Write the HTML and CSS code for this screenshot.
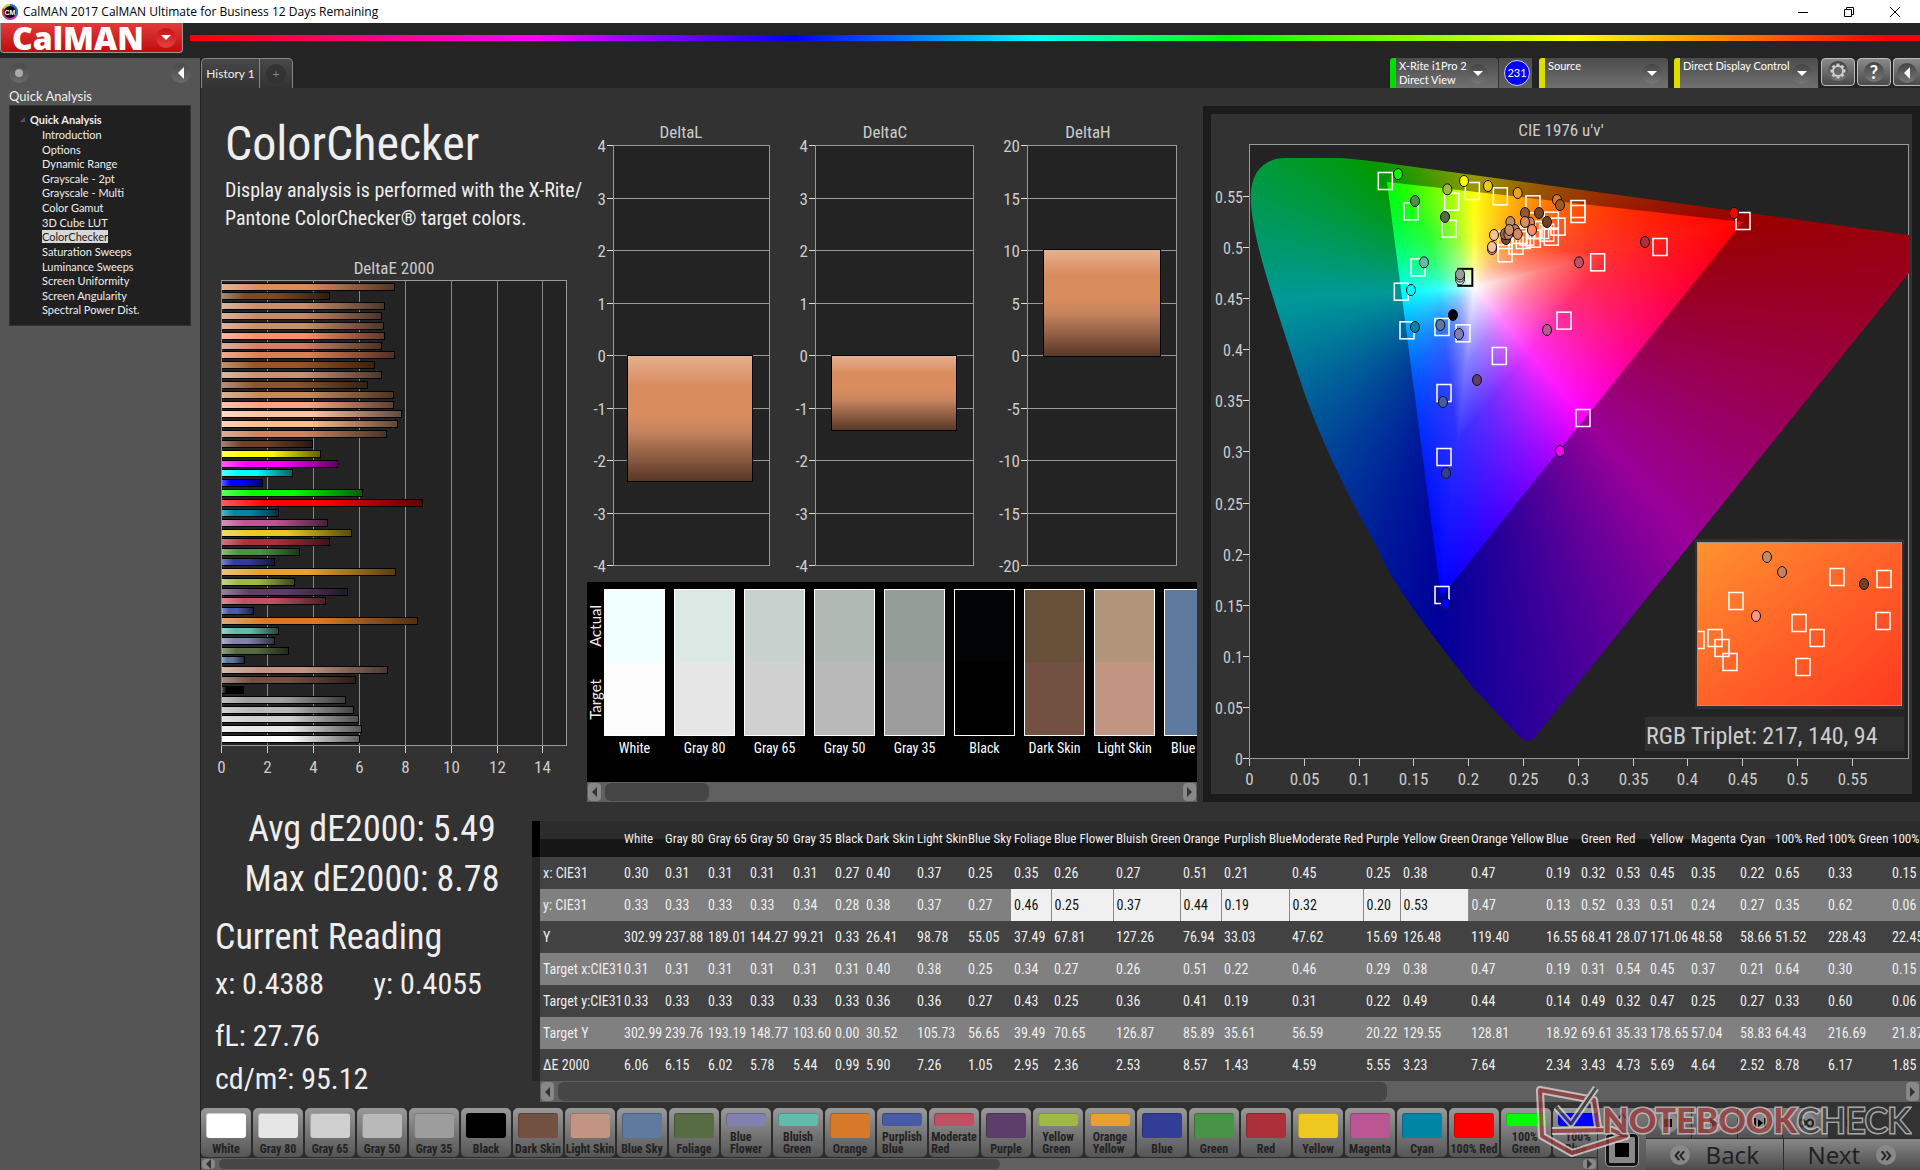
FILE: index.html
```html
<!DOCTYPE html>
<html lang="en">
<head>
<meta charset="utf-8">
<title>CalMAN 2017</title>
<link rel="stylesheet" href="styles.css">
</head>
<body>
<header class="titlebar">
  <svg class="app-icon" viewBox="0 0 16 16" width="16" height="16"><circle cx="8" cy="8" r="8" fill="#3ac04a"/><path d="M8 8L8 0A8 8 0 0 1 15 12Z" fill="#2a6be0"/><path d="M8 8L15 12A8 8 0 0 1 2 13Z" fill="#c030d0"/><path d="M8 8L2 13A8 8 0 0 1 1 4Z" fill="#f0302a"/><path d="M8 8L1 4A8 8 0 0 1 8 0Z" fill="#e8d020"/><circle cx="8" cy="8" r="6" fill="#080808"/><text x="8" y="11" text-anchor="middle" class="app-icon-text">CM</text></svg>
  <span class="window-title">CalMAN 2017 CalMAN Ultimate for Business 12 Days Remaining</span>
  <div class="window-controls">
    <button aria-label="Minimize"><svg width="12" height="12"><path d="M1 6.500H11" stroke="#000"/></svg></button>
    <button aria-label="Restore"><svg width="12" height="12"><path d="M1.500 3.500H8.500V10.500H1.500ZM3.500 3.500V1.500H10.500V8.500H8.500" fill="none" stroke="#000"/></svg></button>
    <button aria-label="Close"><svg width="12" height="12"><path d="M1 1L11 11M11 1L1 11" stroke="#000"/></svg></button>
  </div>
</header>
<div class="brandbar">
  <button class="logo">CalMAN<span class="round logo-round"><svg width="10" height="6"><path d="M0 0H10L5 5Z" fill="#fff"/></svg></span></button>
  <div class="rainbow"></div>
</div>
<div class="app">
  <aside class="sidebar">
    <div class="side-top">
      <button class="round" aria-label="Pin"><i class="dot"></i></button>
      <button class="round" aria-label="Collapse"><svg width="8" height="12"><path d="M7 0V12L1 6Z" fill="#fff"/></svg></button>
    </div>
    <h2 class="side-title">Quick Analysis</h2>
    <nav class="tree">
      <div class="tree-root"><svg width="6" height="6"><path d="M5 0V5H0Z" fill="#555"/></svg>Quick Analysis</div>
      <ul>
        <li><a href="#">Introduction</a></li><li><a href="#">Options</a></li><li><a href="#">Dynamic Range</a></li><li><a href="#">Grayscale - 2pt</a></li><li><a href="#">Grayscale - Multi</a></li><li><a href="#">Color Gamut</a></li><li><a href="#">3D Cube LUT</a></li><li><a href="#" class="current">ColorChecker</a></li><li><a href="#">Saturation Sweeps</a></li><li><a href="#">Luminance Sweeps</a></li><li><a href="#">Screen Uniformity</a></li><li><a href="#">Screen Angularity</a></li><li><a href="#">Spectral Power Dist.</a></li>
      </ul>
    </nav>
  </aside>
  <div class="column">
    <div class="tabbar">
      <div class="tabs"><button class="tab">History 1</button><button class="tab add" aria-label="Add tab"><span class="round">+</span></button></div>
      <div class="devices">
        <button class="device meter"><span>X-Rite i1Pro 2<br>Direct View</span><i class="round drop"></i></button>
        <button class="count"><b>231</b></button>
        <button class="device source"><span>Source</span><i class="round drop"></i></button>
        <button class="device display"><span>Direct Display Control</span><i class="round drop"></i></button>
        <button class="tool" aria-label="Settings"><span class="round"><svg width="18" height="18" viewBox="0 0 18 18"><path d="M9 1.500V4M9 14V16.500M1.500 9H4M14 9H16.500M3.700 3.700L5.500 5.500M12.500 12.500L14.300 14.300M3.700 14.300L5.500 12.500M12.500 5.500L14.300 3.700" stroke="#ccc" stroke-width="3"/><circle cx="9" cy="9" r="5" fill="#666" stroke="#ccc" stroke-width="2"/></svg></span></button>
        <button class="tool" aria-label="Help"><span class="round">?</span></button>
        <button class="tool last" aria-label="Collapse"><span class="round"><svg width="8" height="12"><path d="M7 0V12L1 6Z" fill="#fff"/></svg></span></button>
      </div>
    </div>
    <main class="workspace">
      <section class="upper">
        <div class="left">
          <div class="intro"><h1>ColorChecker</h1><p>Display analysis is performed with the X-Rite/<br>Pantone ColorChecker® target colors.</p></div>
          <svg id="deltaE" viewBox="201 255 378 545"></svg>
        </div>
        <div class="middle">
          <svg id="deltas" viewBox="579 110 624 466"></svg>
          <div class="compare">
            <div class="compare-view">
              <div class="side-labels"><span>Actual</span><span>Target</span></div>
              <div class="pairs" id="pairs"></div>
            </div>
            <div class="scroll"><button class="arrow" aria-label="Left"></button><i class="thumb"></i><button class="arrow forward" aria-label="Right"></button></div>
          </div>
        </div>
        <div class="cie-panel"><svg id="cie" viewBox="1211 114 701 680"></svg></div>
      </section>
      <section class="lower">
        <div class="readings">
          <p class="big">Avg dE2000: 5.49</p>
          <p class="big">Max dE2000: 8.78</p>
          <h2>Current Reading</h2>
          <p class="xy"><span>x: 0.4388</span><span>y: 0.4055</span></p>
          <p class="lum">fL: 27.76</p>
          <p class="nits">cd/m²: 95.12</p>
        </div>
        <div class="data">
          <div class="table-clip"><table id="data"></table></div>
          <div class="scroll data-scroll"><button class="arrow" aria-label="Left"></button><i class="thumb"></i><button class="arrow forward" aria-label="Right"></button></div>
        </div>
      </section>
    </main>
    <footer class="bottom">
      <div class="patches">
        <div class="patch-list" id="patches"></div>
        <div class="scroll patch-scroll"><button class="arrow" aria-label="Left"></button><i class="thumb"></i><button class="arrow forward" aria-label="Right"></button></div>
      </div>
      <div class="stopbox"><button class="up" aria-label="Up"><svg width="12" height="8"><path d="M2 7L6 2L10 7" fill="none" stroke="#222" stroke-width="2"/></svg></button><button class="stop" aria-label="Stop"><i></i></button></div>
      <div class="transport">
        <div class="media">
          <button aria-label="Stop"><span class="round"><svg width="10" height="10"><path d="M1 1H9V9H1Z"/></svg></span></button>
          <button aria-label="Play"><span class="round"><svg width="10" height="10"><path d="M1 0L10 5L1 10Z"/></svg></span></button>
          <button aria-label="Step"><span class="round"><svg width="12" height="10"><path d="M0 0H2V10H0ZM10 0H12V10H10ZM4 1L9 5L4 9Z"/></svg></span></button>
          <button aria-label="Loop"><span class="round"><svg width="16" height="10"><path d="M8 5C5 0 1 1 1 5S5 10 8 5S15 1 15 5S11 10 8 5Z" fill="none" stroke="#222" stroke-width="2"/></svg></span></button>
          <button class="off" aria-label="Refresh"><span class="round"><svg width="12" height="12"><path d="M10 4A5 5 0 1 0 10 8M10 1V5H6" fill="none" stroke="#222" stroke-width="2"/></svg></span></button>
          <button class="off" aria-label="Record"><span class="round"></span></button>
        </div>
        <div class="steps"><button><span class="round">«</span>Back</button><button>Next<span class="round">»</span></button></div>
      </div>
      <div class="watermark">
        <svg viewBox="0 0 96 76" width="96" height="76"><g fill="none" stroke-linejoin="round"><path d="M64 44L60 17L6 7L8 53L38 70L92 53L78 47L18 48" stroke="#ddd" stroke-width="8"/><path d="M64 44L60 17L6 7L8 53L38 70L92 53L78 47L18 48" stroke="#a03c3c" stroke-width="4"/><path d="M22 24L37 41L62 5" stroke="#ddd" stroke-width="7"/><path d="M22 24L37 41L62 5" stroke="#444" stroke-width="3"/></g></svg>
        <span class="mark-red">NOTEBOOK</span><span class="mark-dark">CHECK</span>
      </div>
    </footer>
  </div>
</div>
<script src="app.js"></script>
</body>
</html>
```
FILE: styles.css
```css
:root {
  --ui: "Lato", "Open Sans", sans-serif;
  --narrow: "Roboto Condensed", "Roboto", sans-serif;
}
* { box-sizing: border-box; }
body { margin: 0; min-height: 100vh; display: flex; flex-direction: column; background: #242424; color: #eee; font: 12px/15px var(--ui); overflow-x: hidden; }
button { font: inherit; color: inherit; border: 0; padding: 0; margin: 0; background: none; }
h1, h2, p, ul { margin: 0; padding: 0; font-weight: 400; }
ul { list-style: none; }
svg { display: block; }
a { color: inherit; text-decoration: none; }

.titlebar { height: 23px; background: #fff; color: #000; display: flex; align-items: center; padding: 0 19px 0 2px; gap: 5px; font: 12px/16px "Noto Sans", sans-serif; }
.titlebar .window-title { font-family: "Open Sans", sans-serif; }
.window-title { flex: 1; }
.window-controls { display: flex; gap: 34px; }

.brandbar { height: 35px; display: flex; align-items: flex-start; gap: 7px; }
.logo { width: 183px; height: 30px; border: 1px solid #999; border-top: 0; border-radius: 0 0 4px 4px; background: linear-gradient(#e23b3b, #c00d0d); font: 800 32px/28px "Open Sans", sans-serif; color: #fff; display: flex; align-items: center; justify-content: space-between; padding: 0 6px 0 11px; }
.round { width: 20px; height: 20px; border-radius: 50%; background: linear-gradient(#444, #777); display: inline-flex; align-items: center; justify-content: center; flex: none; }
.logo-round { background: linear-gradient(#c01515, #e84040); }
.rainbow { flex: 1; height: 6px; margin-top: 12px; background: linear-gradient(90deg, #f00 0%, #f0f 20%, #00f 35%, #0ff 49%, #0f0 60%, #ff0 80%, #f00 98%); }

.app { flex: 1; display: flex; }
.sidebar { width: 201px; flex: none; background: #555; border-right: 1px solid #222; padding: 5px 9px; }
.side-top { display: flex; justify-content: space-between; }
.dot { width: 8px; height: 8px; border-radius: 50%; background: #aaa; }
.sidebar .round { background: linear-gradient(#4a4a4a, #6a6a6a); }
.side-title { font-size: 13px; line-height: 16px; margin: 5px 0 1px; }
.tree { background: #202020; border: 1px solid #333; height: 221px; padding: 6px 0 0 10px; font-size: 11px; line-height: 14px; }
.tree-root { font-weight: 700; display: flex; align-items: center; gap: 4px; height: 16px; }
.tree ul { display: grid; grid-auto-rows: 1fr; height: 190px; padding-left: 22px; }
.tree .current { background: #d8d8d8; color: #222; }

.column { flex: 1; min-width: 0; display: flex; flex-direction: column; }
.tabbar { height: 30px; display: flex; justify-content: space-between; }
.tabs, .devices { display: flex; }
.tab { width: 58px; border: 1px solid #888; border-bottom: 0; border-right: 0; border-radius: 5px 0 0 0; background: linear-gradient(#484848, #333); }
.tab.add { width: 34px; border-right: 1px solid #888; border-radius: 0 5px 0 0; color: #888; }
.tab .round { background: #333; }
.device { height: 30px; background: linear-gradient(#4c4c4c, #707070); border-radius: 3px 3px 0 0; border-left: 6px solid #dd0; display: flex; justify-content: space-between; padding: 1px 10px 0 3px; text-align: left; font: 11px/14px var(--ui); color: #fff; white-space: nowrap; }
.device.meter { width: 108px; border-color: #0d0; }
.device.source { width: 129px; margin: 0 6px 0 7px; padding-right: 6px; }
.device.display { width: 144px; margin-right: 3px; padding-right: 6px; }
.drop { align-self: center; }
.drop::after { content: ""; border: 5px solid transparent; border-top-color: #fff; margin-top: 5px; }
.display .drop { margin-left: -6px; }
.count { width: 34px; background: linear-gradient(#4c4c4c, #606060); border-left: 1px solid #333; padding-left: 3px; }
.count b { display: inline-block; width: 26px; height: 26px; border-radius: 50%; border: 1px solid #cce; background: #00f; font: 11px/24px var(--ui); color: #fff; }
.tool { width: 34px; height: 28px; margin-right: 2px; border: 1px solid #bbb; border-radius: 4px; background: linear-gradient(#8a8a8a, #4a4a4a); font: bold 18px/20px var(--ui); color: #fff; }
.tool.last { width: 27px; margin: 0; border-right: 0; border-radius: 4px 0 0 4px; }

.workspace { flex: 1; background: #323232; }
.upper { display: grid; grid-template-columns: 378fr 624fr 717fr; }
.upper > div { min-width: 0; }
.intro { height: 167px; padding: 27px 0 0 24px; }
.intro h1 { font: 48px/58px var(--narrow); }
.intro p { font: 20px/28px var(--narrow); padding-top: 3px; white-space: nowrap; }
.middle { padding-top: 22px; }
.cie-panel { border: 8px solid #1b1b1b; margin-top: 18px; align-self: start; }
.upper text { font-family: var(--narrow); fill: #ccc; }
.app-icon-text { font: bold 7px "Liberation Sans", sans-serif; fill: #fff; }

.compare { margin: 6px 6px 0 8px; }
.compare-view { background: #000; height: 200px; display: flex; overflow: hidden; padding-top: 7px; }
.side-labels { width: 17px; flex: none; height: 147px; display: flex; flex-direction: column; justify-content: space-around; align-items: center; }
.side-labels span { writing-mode: vertical-rl; rotate: 180deg; font: 15px/17px var(--ui); }
.pairs { display: flex; gap: 9px; }
.pair { width: 61px; flex: none; text-align: center; font: 14px/24px var(--narrow); white-space: nowrap; color: #fff; }
.pair i { display: block; height: 147px; border: 1px solid #fff; }
.scroll { height: 20px; background: #606060; display: flex; padding: 1px; gap: 4px; align-items: stretch; }
.scroll .thumb { width: 104px; border-radius: 6px; background: #464646; }
.arrow { width: 13px; border-radius: 4px; background: #888; display: flex; align-items: center; justify-content: center; }
.arrow::after { content: ""; border: 5px solid transparent; border-right-color: #333; border-left: 0; }
.arrow.forward { margin-left: auto; }
.arrow.forward::after { border: 5px solid transparent; border-left-color: #333; border-right: 0; }

.lower { display: flex; }
.readings { width: 331px; flex: none; padding: 2px 0 0 14px; font-family: var(--narrow); }
.big { font-size: 36px; line-height: 50px; text-align: center; padding-right: 3px; }
.readings h2 { font-size: 36px; line-height: 50px; margin-top: 8px; }
.xy { font-size: 30px; line-height: 44px; display: flex; }
.xy span { width: 161px; }
.lum, .nits { font-size: 30px; line-height: 43px; }
.lum { margin-top: 8px; }
.data { flex: 1; min-width: 0; padding: 19px 0 6px; }
.table-clip { overflow: hidden; }
table { table-layout: fixed; border-collapse: collapse; font: 14px/16px var(--narrow); color: #eee; }
th, td { height: 32px; padding: 0 0 0 3px; text-align: left; font-weight: 400; white-space: nowrap; }
thead th { height: 36px; background: linear-gradient(#2c2c2c 50%, #161616 50%); font-size: 13px; }
tbody tr { background: #424242; }
tbody tr:nth-child(even) { background: #808080; }
.strip, thead .strip { background: #262626; padding: 0; }
thead .strip { background: #000; }
.selected { background: #f0f0f0; color: #111; border-right: 1px solid #888; }
.data-scroll { margin-left: 8px; height: 21px; }
.data-scroll .thumb { width: 829px; }

.bottom { height: 62px; display: flex; background: #2c2c2c; position: relative; color: #222; }
.patches { flex: 1; min-width: 0; }
.patch-list { display: flex; gap: 2px; height: 50px; overflow: hidden; }
.patch { width: 50px; height: 49px; flex: none; border-radius: 5px; background: linear-gradient(#999, #555); padding: 5px 0 2px; display: flex; flex-direction: column; align-items: center; gap: 5px; font: bold 12px/12px var(--narrow); color: #222; }
.patch i { flex: 1; width: 40px; border-radius: 3px; border: 1px solid #0003; border-right: 0; border-bottom: 0; }
.patch span { text-align: left; white-space: nowrap; }
.patch-scroll { height: 12px; }
.patch-scroll .thumb { width: 781px; }
.stopbox { width: 49px; background: linear-gradient(#777, #555); display: flex; flex-direction: column; align-items: center; gap: 2px; border-left: 1px solid #333; }
.up { height: 16px; }
.stop { width: 32px; height: 32px; border: 3px solid #111; outline: 1px solid #999; border-radius: 4px; background: #888; display: flex; align-items: center; justify-content: center; margin-top: 8px; }
.stop i { width: 14px; height: 14px; background: #000; }
.transport { width: 274px; }
.media { display: flex; height: 30px; gap: 1px; }
.media button { flex: 1; background: linear-gradient(#808080, #505050); }
.media .off, .media .off .round { background: #333; }
.media .round { background: #888; }
.steps { display: flex; gap: 1px; height: 32px; padding-top: 1px; }
.steps button { flex: 1; background: linear-gradient(#888, #4c4c4c); font: 24px/28px "Noto Sans", sans-serif; display: flex; align-items: center; justify-content: center; gap: 16px; color: #222; }
.steps .round { background: #888; line-height: 18px; padding-bottom: 4px; }
.watermark { position: absolute; right: 10px; top: -25px; display: flex; opacity: .75; font: 900 34px/74px "Lato", sans-serif; }
.watermark span { paint-order: stroke; -webkit-text-stroke: 3px #ccc; }
.watermark svg { margin-right: -28px; }
.mark-red { color: #a03c3c; }
.mark-dark { color: #3c3c3c; font-weight: 400; }
```
FILE: app.js
```js
const byId = id => document.getElementById(id);
const rect = (x, y, w, h, extra) => `<rect x="${x}" y="${y}" width="${w}" height="${h}" ${extra}/>`;
const line = (x1, y1, x2, y2, c) => `<path d="M${x1} ${y1}L${x2} ${y2}" stroke="${c}" stroke-width="1"/>`;
const label = (x, y, t, anchor, size = 17) => `<text x="${x}" y="${y}" text-anchor="${anchor}" font-size="${size}">${t}</text>`;

// DeltaE 2000 bars, top to bottom
const bars = [[7.6,'#d98c5e'],[4.75,'#7a4a24'],[7.15,'#c98e6c'],[7,'#c78a6a'],[7.1,'#c98e6c'],[7.15,'#ff8f6a'],[7,'#cf8263'],[7.6,'#d97f55'],[6.7,'#a0531f'],[7,'#cc9070'],[6.4,'#8a5630'],[7.55,'#c58a5a'],[7.55,'#ffa57d'],[7.9,'#ffc3a5'],[7.7,'#ffbe8c'],[7.25,'#c98660'],[4,'#6e4028'],[4.35,'#ffff00'],[5.1,'#ff00ff'],[3.15,'#00ffff'],[1.85,'#0000ff'],[6.17,'#00ff00'],[8.78,'#ff0000'],[2.52,'#0085a5'],[4.64,'#bb5695'],[5.69,'#edc820'],[4.73,'#ad2f3a'],[3.43,'#479447'],[2.34,'#333d95'],[7.64,'#e6a12e'],[3.23,'#9fba41'],[5.55,'#5d3e6b'],[4.59,'#c15060'],[1.43,'#4a5ba6'],[8.57,'#d87929'],[2.53,'#62bca9'],[2.36,'#8280b0'],[2.95,'#576c43'],[1.05,'#5e799f'],[7.26,'#c29582'],[5.9,'#735142'],[.99,'#000000'],[5.44,'#9d9d9d'],[5.78,'#b9b9b9'],[6.02,'#d0d0d0'],[6.15,'#e6e6e6'],[6.06,'#ffffff']];
let s = `<defs><linearGradient id="shade"><stop offset="0" stop-color="#fff" stop-opacity=".35"/><stop offset=".22" stop-color="#fff" stop-opacity="0"/><stop offset=".5" stop-color="#000" stop-opacity="0"/><stop offset="1" stop-color="#000" stop-opacity=".62"/></linearGradient></defs>`;
s += label(394, 274, 'DeltaE 2000', 'middle') + rect(221.5, 280.5, 345, 465, 'fill="#232323" stroke="#999"');
for (let v = 0; v <= 14; v += 2) {
  const x = Math.round(221 + v * 22.96) + .5;
  s += line(x, 281, x, 746, '#888') + line(x, 746, x, 753, '#ccc') + label(x, 773, v, 'middle');
}
bars.forEach(([v, c], i) => {
  const y = Math.round(286.5 + i * 9.84) - 4, w = Math.round(v * 22.96) - 1;
  s += rect(222, y, w, 8, 'fill="#000"') + rect(222, y + 1, w - 1, 6, `fill="${c}"`) + rect(222, y + 1, w - 1, 6, 'fill="url(#shade)"');
});
byId('deltaE').innerHTML = s;

// DeltaL, DeltaC and DeltaH columns
s = `<defs><linearGradient id="drop" x2="0" y2="1"><stop offset="0" stop-color="#e6b090"/><stop offset=".24" stop-color="#d98c5e"/><stop offset=".46" stop-color="#d98c5e"/><stop offset=".6" stop-color="#c5845e"/><stop offset="1" stop-color="#583626"/></linearGradient></defs>`;
[['DeltaL', 613, 769, 681, 1, 627, 752, 355, 481], ['DeltaC', 815, 973, 885, 1, 831, 956, 355, 430], ['DeltaH', 1027, 1176, 1088, 5, 1043, 1160, 249, 356]].forEach(([t, x1, x2, cx, step, bx1, bx2, by1, by2]) => {
  s += label(cx, 138, t, 'middle') + rect(x1 + .5, 145.5, x2 - x1, 420, 'fill="#232323" stroke="#999"');
  for (let i = 0; i <= 8; i++) {
    const y = Math.round(145 + i * 52.5) + .5;
    s += line(x1, y, x2, y, '#999') + line(x1 - 6, y, x1, y, '#ddd') + label(x1 - 7, y + 6, (4 - i) * step, 'end');
  }
  s += rect(bx1 + .5, by1 + .5, bx2 - bx1, by2 - by1, 'fill="url(#drop)" stroke="#000"');
});
byId('deltas').innerHTML = s;

// Chromaticity diagram
const locus = 'M1285 158H1338Q1360 159 1400 165L1909 235V273L1534 738Q1527 745 1519 736L1475 690C1420 620 1390 580 1377 547C1350 500 1320 440 1301 383C1280 320 1265 275 1258 245C1249 205 1248 188 1257 172Q1267 158 1285 158Z';
const hues = k => { const m = Math.round(255 * k); return `conic-gradient(from 0deg at 224px 142px, rgb(${m},${m},0) 0deg, rgb(${m},0,0) 77deg, rgb(${m},0,${m}) 140deg, rgb(0,0,${m}) 186deg, rgb(0,${m},${m}) 266deg, rgb(0,${m},0) 320deg, rgb(${m},${m},0) 360deg)`; };
const layer = (k, clip) => `<g clip-path="url(#${clip})"><foreignObject x="1250" y="145" width="660" height="613"><div style="width:660px;height:613px;background:${hues(k)}"></div></foreignObject></g>`;
const W = [1474, 287], R = [1743, 222], G = [1387, 182], B = [1441, 597];
let defs = `<clipPath id="locus"><path d="${locus}"/></clipPath><clipPath id="gamut"><path d="M${R}L${G}L${B}Z"/></clipPath><clipPath id="insetClip"><rect x="1698" y="543" width="203" height="162"/></clipPath>`;
let whites = '';
[[R, G], [G, B], [B, R]].forEach(([a, b], i) => {
  const dx = b[0] - a[0], dy = b[1] - a[1], k = ((W[0] - a[0]) * dx + (W[1] - a[1]) * dy) / (dx * dx + dy * dy);
  defs += `<linearGradient id="w${i}" gradientUnits="userSpaceOnUse" x1="${W[0]}" y1="${W[1]}" x2="${a[0] + k * dx}" y2="${a[1] + k * dy}"><stop offset="0" stop-color="#fff"/><stop offset=".25" stop-color="#fff" stop-opacity=".5"/><stop offset=".5" stop-color="#fff" stop-opacity=".18"/><stop offset="1" stop-color="#fff" stop-opacity="0"/></linearGradient>`;
  whites += `<path d="M${W}L${a}L${b}Z" fill="url(#w${i})" shape-rendering="crispEdges"/>`;
});
defs += `<linearGradient id="warm" x2="1" y2="1"><stop offset="0" stop-color="#ff9230"/><stop offset=".5" stop-color="#ff6228"/><stop offset="1" stop-color="#ff3a20"/></linearGradient>`;
s = `<defs>${defs}</defs>` + rect(1211, 114, 701, 680, 'fill="#323232"') + rect(1249.5, 144.5, 659, 614, 'fill="#232323" stroke="#999"');
s += layer(.6, 'locus') + layer(1, 'gamut') + whites;
s += label(1561, 136, "CIE 1976 u'v'", 'middle');
for (let i = 0; i <= 11; i++) {
  const t = String(+(i * .05).toFixed(2)), x = Math.round(1249 + i * 54.8) + .5, y = Math.round(758 - i * 51.1) + .5;
  s += line(x, 759, x, 766, '#ccc') + label(x, 785, t, 'middle') + line(1243, y, 1249, y, '#ddd') + label(1243, y + 6, t, 'end', 16);
}
const square = (x, y, c = '#fff', w = 1.5) => rect(x - 7, y - 8.5, 14, 17, `fill="none" stroke="${c}" stroke-width="${w}"`);
const dot = (x, y, c) => `<ellipse cx="${x}" cy="${y}" rx="4.500" ry="5.500" fill="${c}" stroke="#111"/>`;
const near = ([x, y]) => [1360 + x / 3, 160 + y / 3];
[[76,63],[153,154],[275,125],[337,93],[421,109],[519,133],[267,206],[654,147],[654,162],[174,322],[124,395],[141,511],[246,501],[309,520],[418,588],[713,307],[612,482],[594,200],[574,182],[435,280],[468,257],[574,230],[435,240],[490,240],[500,230],[520,236],[545,210],[560,218],[480,225],[525,210]].forEach(p => s += square(...near(p)));
[[1743,221],[1660,247],[1444,393],[1583,418],[1444,457],[1442,595]].forEach(p => s += square(...p));
s += square(...near([316, 352]), '#000', 2);
[[114,42,'#0f0'],[312,63,'#ff0'],[384,78,'#edc820'],[473,99,'#e6a12e'],[262,88,'#9fba41'],[165,123,'#479447'],[255,171,'#576c43'],[192,307,'#62bca9'],[153,390,'#0ff'],[165,501,'#0085a5'],[241,495,'#5e799f'],[297,522,'#8280b0'],[279,465,'#000'],[657,307,'#c15060'],[561,510,'#bb5695'],[591,120,'#d87929'],[600,135,'#a55520'],[495,159,'#93582f'],[537,159,'#7a4423'],[561,186,'#733f26'],[451,186,'#c58a5e'],[510,188,'#d17f5d'],[495,186,'#d98c5e'],[516,210,'#ff8f72'],[402,225,'#ffc08f'],[396,267,'#ffb090'],[396,261,'#ffc0a6'],[438,237,'#6a4a38'],[435,222,'#a87050'],[465,210,'#b87a58'],[445,222,'#c08060'],[448,210,'#c98e6c'],[473,222,'#d58866'],[300,358,'#eee'],[300,350,'#ccc'],[300,343,'#9a9a9a']].forEach(p => s += dot(...near(p), p[2]));
[[1734,213,'red'],[1645,242,'#ad2f3a'],[1477,380,'#5d3e6b'],[1443,402,'#4a5ba6'],[1560,451,'#f0f'],[1446,473,'#333d95'],[1446,604,'#00f']].forEach(p => s += dot(...p));
s += rect(1695, 539, 209, 170, 'fill="#303030"') + rect(1697.5, 542.5, 204, 163, 'fill="url(#warm)" stroke="#999"') + '<g clip-path="url(#insetClip)">';
[[1837,577],[1884,579],[1736,601],[1799,623],[1883,621],[1817,638],[1715,638],[1722,648],[1730,662],[1803,667],[1697,640]].forEach(p => s += square(...p));
[[1767,557,'#c58a5e'],[1782,572,'#c97f60'],[1864,584,'#733f26'],[1756,616,'#ff9a80']].forEach(p => s += dot(...p));
s += '</g>' + rect(1645, 717, 259, 34, 'fill="#303030"') + label(1646, 744, 'RGB Triplet: 217, 140, 94', 'start', 24);
byId('cie').innerHTML = s;

byId('pairs').innerHTML = [['White','#f0ffff','#fcfcfc'],['Gray 80','#dce8e3','#e6e6e6'],['Gray 65','#c7d1cd','#d0d0d0'],['Gray 50','#b0b9b4','#b9b9b9'],['Gray 35','#959d99','#9d9d9d'],['Black','#020305','#000'],['Dark Skin','#675038','#735142'],['Light Skin','#b0957a','#c29582'],['Blue Sky','#5d799b','#5e7a9f']]
  .map(([n, a, t]) => `<div class="pair"><i style="background:linear-gradient(${a} 50%,${t} 50%)"></i>${n}</div>`).join('');

// name, column width, x, y, Y, target x, target y, target Y, dE
const columns = `|81|x: CIE31|y: CIE31|Y|Target x:CIE31|Target y:CIE31|Target Y|ΔE 2000
White|41|0.30|0.33|302.99|0.31|0.33|302.99|6.06
Gray 80|43|0.31|0.33|237.88|0.31|0.33|239.76|6.15
Gray 65|42|0.31|0.33|189.01|0.31|0.33|193.19|6.02
Gray 50|43|0.31|0.33|144.27|0.31|0.33|148.77|5.78
Gray 35|42|0.31|0.34|99.21|0.31|0.33|103.60|5.44
Black|31|0.27|0.28|0.33|0.31|0.33|0.00|0.99
Dark Skin|51|0.40|0.38|26.41|0.40|0.36|30.52|5.90
Light Skin|51|0.37|0.37|98.78|0.38|0.36|105.73|7.26
Blue Sky|46|0.25|0.27|55.05|0.25|0.27|56.65|1.05
Foliage|40|0.35|0.46|37.49|0.34|0.43|39.49|2.95
Blue Flower|62|0.26|0.25|67.81|0.27|0.25|70.65|2.36
Bluish Green|67|0.27|0.37|127.26|0.26|0.36|126.87|2.53
Orange|41|0.51|0.44|76.94|0.51|0.41|85.89|8.57
Purplish Blue|68|0.21|0.19|33.03|0.22|0.19|35.61|1.43
Moderate Red|74|0.45|0.32|47.62|0.46|0.31|56.59|4.59
Purple|37|0.25|0.20|15.69|0.29|0.22|20.22|5.55
Yellow Green|68|0.38|0.53|126.48|0.38|0.49|129.55|3.23
Orange Yellow|75|0.47|0.47|119.40|0.47|0.44|128.81|7.64
Blue|35|0.19|0.13|16.55|0.19|0.14|18.92|2.34
Green|35|0.32|0.52|68.41|0.31|0.49|69.61|3.43
Red|34|0.53|0.33|28.07|0.54|0.32|35.33|4.73
Yellow|41|0.45|0.51|171.06|0.45|0.47|178.65|5.69
Magenta|49|0.35|0.24|48.58|0.37|0.25|57.04|4.64
Cyan|35|0.22|0.27|58.66|0.21|0.27|58.83|2.52
100% Red|53|0.65|0.35|51.52|0.64|0.33|64.43|8.78
100% Green|64|0.33|0.62|228.43|0.30|0.60|216.69|6.17
100% Blue|68|0.15|0.06|22.45|0.15|0.06|21.87|1.85`.split('\n').map(r => r.split('|'));
const cells = (r, tag) => columns.map((c, i) => {
  const name = i === 0 ? 'th' : tag;
  return `<${name}${r === 3 && i > 9 && i < 18 ? ' class="selected"' : ''}>${c[r]}</${name}>`;
}).join('');
const table = byId('data');
table.style.width = columns.reduce((a, c) => a + +c[1], 8) + 'px';
table.innerHTML = '<colgroup><col style="width:8px">' + columns.map(c => `<col style="width:${c[1]}px">`).join('') + '</colgroup><thead><tr><th class="strip"></th>' + cells(0, 'th') + '</tr></thead><tbody>' + [2, 3, 4, 5, 6, 7, 8].map(r => `<tr><td class="strip"></td>${cells(r, 'td')}</tr>`).join('') + '</tbody>';

byId('patches').innerHTML = [['White','#fff'],['Gray 80','#e6e6e6'],['Gray 65','#d0d0d0'],['Gray 50','#b9b9b9'],['Gray 35','#9d9d9d'],['Black','#000'],['Dark Skin','#735142'],['Light Skin','#c29582'],['Blue Sky','#5e7a9f'],['Foliage','#576c43'],['Blue<br>Flower','#8280b0'],['Bluish<br>Green','#62bca9'],['Orange','#d87929'],['Purplish<br>Blue','#4a5ba6'],['Moderate<br>Red','#c15060'],['Purple','#5d3e6b'],['Yellow<br>Green','#9fba41'],['Orange<br>Yellow','#e6a12e'],['Blue','#333d95'],['Green','#479447'],['Red','#ad2f3a'],['Yellow','#edc820'],['Magenta','#bb5695'],['Cyan','#0085a5'],['100% Red','#f00'],['100%<br>Green','#0f0'],['100%<br>Blue','#00f']]
  .map(([n, c]) => `<button class="patch"><i style="background:${c}"></i><span>${n}</span></button>`).join('');
```
